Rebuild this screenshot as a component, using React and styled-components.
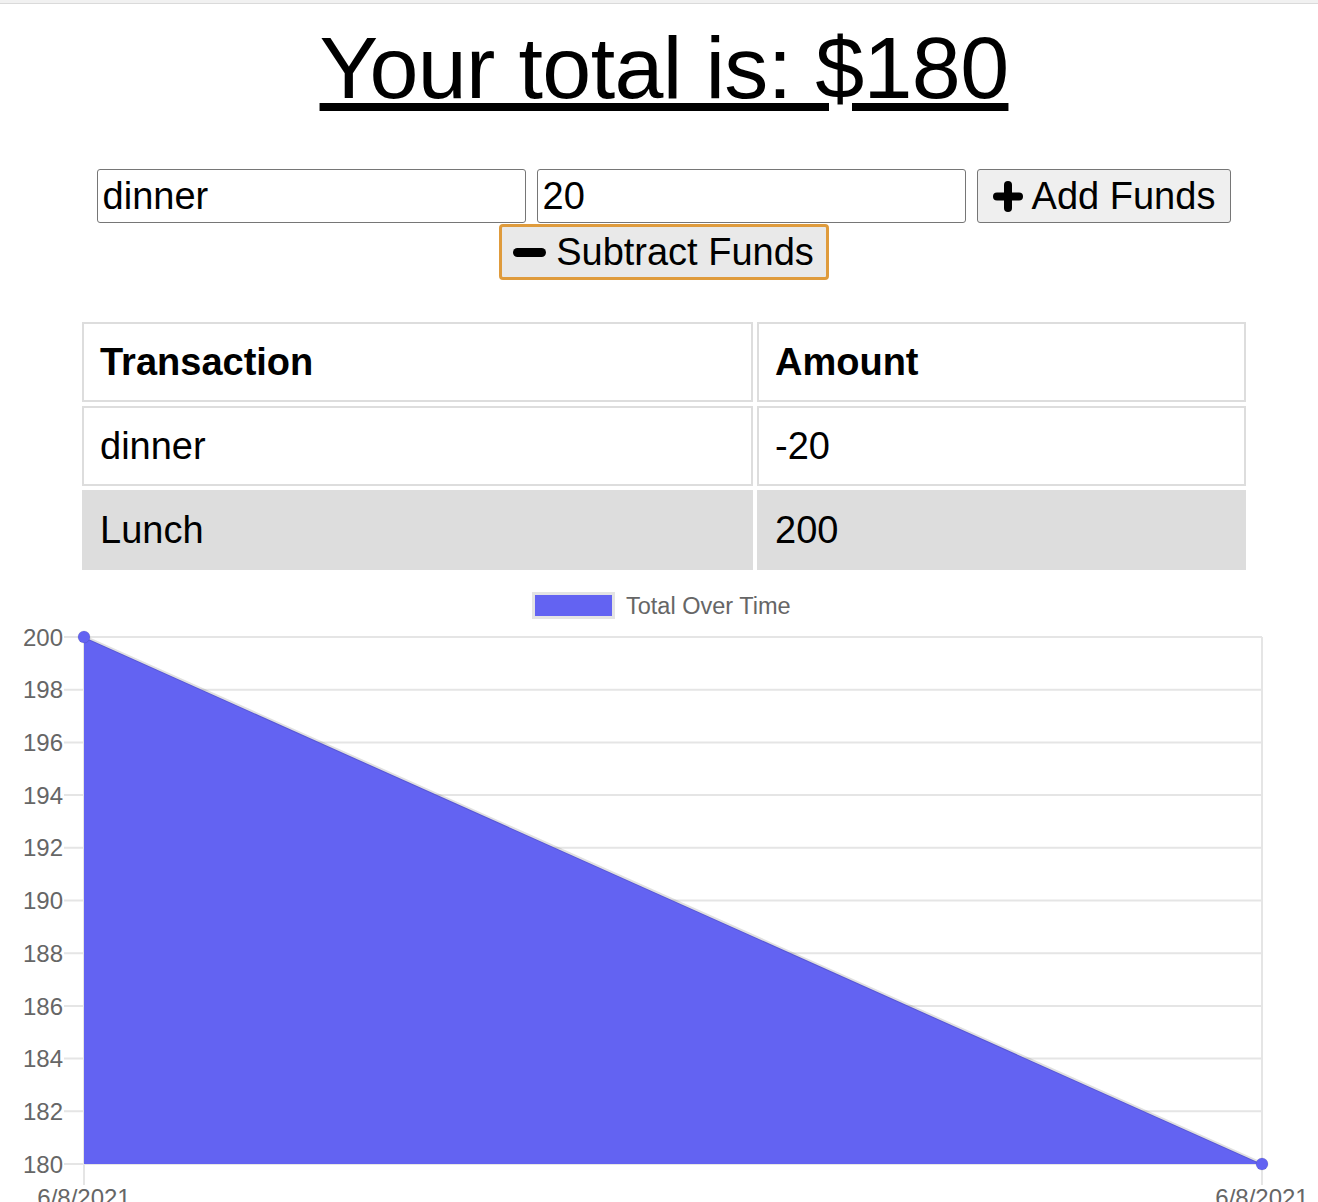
import React from "react";
import styled, { createGlobalStyle } from "styled-components";

const GlobalStyle = createGlobalStyle`
  html, body { margin: 0; padding: 0; background: #fff; }
  body { font-family: "Liberation Sans", Arial, sans-serif; color: #000; }
  * { box-sizing: border-box; }
`;

const TopBar = styled.div`
  height: 4px;
  background: #f1f1f1;
  border-bottom: 1px solid #dadada;
`;

const Main = styled.main`
  padding-left: 10px;
`;

const Title = styled.h1`
  margin: 13px 0 0;
  font-size: 88px;
  font-weight: 400;
  line-height: normal;
  letter-spacing: -0.65px;
  text-align: center;
  text-decoration: underline;
`;

const Form = styled.form`
  margin-top: 50px;
  display: flex;
  flex-wrap: wrap;
  justify-content: center;
  column-gap: 11px;
  row-gap: 1px;
`;

const Field = styled.input`
  width: 429px;
  height: 54px;
  border: 1px solid #767676;
  border-radius: 3px;
  padding: 0 5px;
  font-family: "Liberation Sans", Arial, sans-serif;
  font-size: 38px;
  color: #000;
  background: #fff;
  outline: none;
`;

const Button = styled.button`
  display: inline-flex;
  align-items: center;
  justify-content: center;
  gap: ${(p) => (p.$focused ? "10px" : "9px")};
  height: ${(p) => (p.$focused ? "56px" : "54px")};
  padding: ${(p) => (p.$focused ? "0 12px 0 11px" : "0 15px")};
  border: ${(p) => (p.$focused ? "3px solid #df9b3c" : "1px solid #767676")};
  border-radius: ${(p) => (p.$focused ? "4px" : "3px")};
  background: ${(p) => (p.$focused ? "#e9e9e9" : "#efefef")};
  font-family: "Liberation Sans", Arial, sans-serif;
  font-size: 38px;
  color: #000;
  cursor: pointer;
`;

const Icon = styled.svg`
  display: block;
  flex: none;
`;

const Table = styled.table`
  margin: 38px auto 0;
  width: 1172px;
  table-layout: fixed;
  border-collapse: separate;
  border-spacing: 4px;
`;

const Cell = styled.td`
  border: 2px solid #dddddd;
  padding: 16px;
  font-size: 38px;
  line-height: 44px;
  font-weight: ${(p) => (p.$head ? 700 : 400)};
  text-align: left;
  background: ${(p) => (p.$shaded ? "#dddddd" : "#fff")};
  white-space: nowrap;
`;

const ChartWrap = styled.div`
  display: block;
  width: 1318px;
`;

const PlusIcon = () => (
  <Icon width="30" height="31" viewBox="0 0 30 31">
    <g stroke="#000" strokeWidth="8" strokeLinecap="round">
      <line x1="4" y1="15.5" x2="26" y2="15.5" />
      <line x1="15" y1="4" x2="15" y2="27" />
    </g>
  </Icon>
);

const MinusIcon = () => (
  <Icon width="33" height="9" viewBox="0 0 33 9">
    <line x1="4.5" y1="4.5" x2="28.5" y2="4.5" stroke="#000" strokeWidth="9" strokeLinecap="round" />
  </Icon>
);

const TOP = 574;
const Y0 = 637 - TOP;
const Y1 = 1164 - TOP;
const X0 = 84;
const X1 = 1262;
const FILL = "#6363f2";

const Chart = () => {
  const ticks = [];
  for (let i = 0; i <= 10; i++) {
    const v = 200 - i * 2;
    const y = Y0 + ((Y1 - Y0) * i) / 10;
    ticks.push({ v, y });
  }
  return (
    <ChartWrap>
      <svg width="1318" height="640" viewBox="0 0 1318 640" style={{ display: "block" }}>
        <rect x="533.5" y={593.5 - TOP} width="80" height="24" fill={FILL} stroke="#e4e4e4" strokeWidth="3" />
        <text x="626" y={614 - TOP} fontFamily="Liberation Sans, Arial, sans-serif" fontSize="23.5" fill="#666">
          Total Over Time
        </text>
        {ticks.map((t) => (
          <g key={t.v}>
            <line x1="64" y1={t.y} x2={X1} y2={t.y} stroke="#e5e5e5" strokeWidth="2" />
            <text
              x="63"
              y={t.y + 8.6}
              textAnchor="end"
              fontFamily="Liberation Sans, Arial, sans-serif"
              fontSize="24"
              fill="#666"
            >
              {t.v}
            </text>
          </g>
        ))}
        <line x1={X0} y1={Y0} x2={X0} y2={Y1 + 21} stroke="#e5e5e5" strokeWidth="2" />
        <line x1={X1} y1={Y0} x2={X1} y2={Y1 + 21} stroke="#e5e5e5" strokeWidth="2" />
        <polygon points={`${X0},${Y0} ${X1},${Y1} ${X0},${Y1}`} fill={FILL} />
        <line x1={X0} y1={Y0 - 0.5} x2={X1} y2={Y1 - 0.5} stroke="rgba(0,0,0,0.12)" strokeWidth="3" />
        <circle cx={X0} cy={Y0} r="6" fill={FILL} stroke="rgba(0,0,0,0.1)" strokeWidth="1" />
        <circle cx={X1} cy={Y1} r="6" fill={FILL} stroke="rgba(0,0,0,0.1)" strokeWidth="1" />
        <text x={X0} y={1206 - TOP} textAnchor="middle" fontFamily="Liberation Sans, Arial, sans-serif" fontSize="24" fill="#666">
          6/8/2021
        </text>
        <text x={X1} y={1206 - TOP} textAnchor="middle" fontFamily="Liberation Sans, Arial, sans-serif" fontSize="24" fill="#666">
          6/8/2021
        </text>
      </svg>
    </ChartWrap>
  );
};

const rows = [
  { name: "dinner", value: "-20" },
  { name: "Lunch", value: "200", shaded: true },
];

export default function App() {
  return (
    <>
      <GlobalStyle />
      <TopBar />
      <Main>
        <Title>Your total is: $180</Title>
        <Form onSubmit={(e) => e.preventDefault()}>
          <Field type="text" defaultValue="dinner" />
          <Field type="number" defaultValue="20" />
          <Button type="button">
            <PlusIcon />
            Add Funds
          </Button>
          <Button type="button" $focused>
            <MinusIcon />
            Subtract Funds
          </Button>
        </Form>
        <Table>
          <colgroup>
            <col style={{ width: "671px" }} />
            <col style={{ width: "489px" }} />
          </colgroup>
          <thead>
            <tr>
              <Cell as="th" $head>Transaction</Cell>
              <Cell as="th" $head>Amount</Cell>
            </tr>
          </thead>
          <tbody>
            {rows.map((r) => (
              <tr key={r.name}>
                <Cell $shaded={r.shaded}>{r.name}</Cell>
                <Cell $shaded={r.shaded}>{r.value}</Cell>
              </tr>
            ))}
          </tbody>
        </Table>
      </Main>
      <Chart />
    </>
  );
}
